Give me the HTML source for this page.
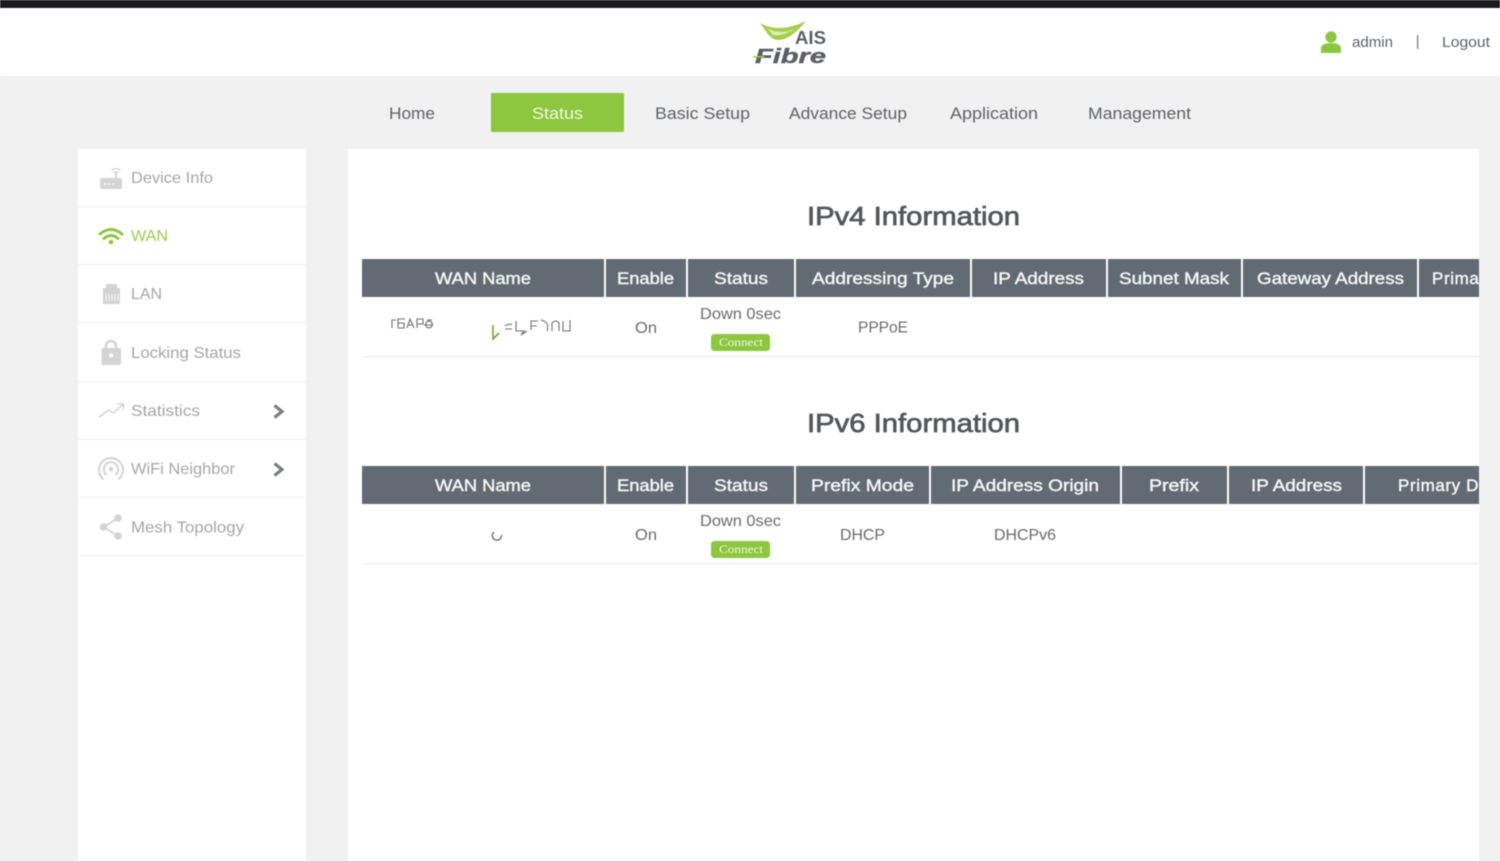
<!DOCTYPE html>
<html lang="en"><head><meta charset="utf-8"><title>AIS Fibre - WAN Status</title>
<style>
html,body{margin:0;padding:0;width:1500px;height:861px;overflow:hidden;background:#f1f1f1}
svg{display:block;filter:blur(.45px)}
text{font-family:"Liberation Sans",sans-serif}
.nav{font-size:17px;fill:#5f6268}
.side{font-size:16px;fill:#a6a6a6}
.th{font-size:17px;fill:#f4f5f6;stroke:#f4f5f6;stroke-width:.45px}
.td{font-size:16px;fill:#6a6a6a}
.title{font-size:26px;fill:#54565a;stroke:#54565a;stroke-width:.7px}
.hd{fill:#626a73}
.btn{font-family:"Liberation Serif",serif;font-size:12px;fill:#eef6e2}
.ic{fill:#d4d4d4}
.st{fill:none;stroke:#d4d4d4;stroke-linecap:round;stroke-linejoin:round}
.sep{fill:#f2f2f2}
</style></head><body>
<svg width="1500" height="861" viewBox="0 0 1500 861" xmlns="http://www.w3.org/2000/svg">
<defs><clipPath id="c"><rect x="348" y="149" width="1131" height="712"/></clipPath></defs>
<rect width="1500" height="861" fill="#f1f1f1"/>
<rect width="1500" height="8" fill="#1a1a1c"/>
<rect y="8" width="1500" height="68" fill="#fff"/>

<!-- logo -->
<path d="M760 23C771 29 785 31 806 21C797 32 788 40 778 40C770 40 766 31 760 23Z" fill="#a4cf4a"/>
<path d="M767 28C775 33 786 33 797 28C788 33 778 37 773 35Z" fill="#dcecb4"/>
<text x="795" y="44" font-size="18" font-weight="bold" fill="#5c5f63" textLength="31" lengthAdjust="spacingAndGlyphs">AIS</text>
<text x="755" y="63" font-size="20" font-weight="bold" font-style="italic" fill="#5c5f63" textLength="71" lengthAdjust="spacingAndGlyphs" stroke="#5c5f63" stroke-width=".4">Fibre</text>
<rect x="753" y="56" width="11" height="1.600" fill="#a4cf4a"/>

<!-- user -->
<circle cx="1331" cy="37" r="5.600" fill="#8dc63f"/>
<path d="M1321 53V48C1321 45 1325 43 1331 43S1341 45 1341 48V53Z" fill="#8dc63f"/>
<text x="1352" y="47" font-size="15" fill="#5f6268" textLength="41" lengthAdjust="spacingAndGlyphs">admin</text>
<rect x="1417" y="35" width="1.200" height="14" fill="#777"/>
<text x="1442" y="47" font-size="15" fill="#5f6268" textLength="48" lengthAdjust="spacingAndGlyphs">Logout</text>

<!-- nav -->
<rect x="491" y="93" width="133" height="39" rx="1" fill="#8dc63f"/>
<text class="nav" x="389" y="119" textLength="46" lengthAdjust="spacingAndGlyphs">Home</text>
<text class="nav" x="532" y="119" textLength="51" lengthAdjust="spacingAndGlyphs" style="fill:#f2f8e6">Status</text>
<text class="nav" x="655" y="119" textLength="95" lengthAdjust="spacingAndGlyphs">Basic Setup</text>
<text class="nav" x="789" y="119" textLength="118" lengthAdjust="spacingAndGlyphs">Advance Setup</text>
<text class="nav" x="950" y="119" textLength="88" lengthAdjust="spacingAndGlyphs">Application</text>
<text class="nav" x="1088" y="119" textLength="103" lengthAdjust="spacingAndGlyphs">Management</text>

<!-- sidebar -->
<rect x="78" y="149" width="228" height="712" fill="#fff"/>
<rect class="sep" x="78" y="206" width="228" height="1.200"/>
<rect class="sep" x="78" y="264" width="228" height="1.200"/>
<rect class="sep" x="78" y="322" width="228" height="1.200"/>
<rect class="sep" x="78" y="381" width="228" height="1.200"/>
<rect class="sep" x="78" y="439" width="228" height="1.200"/>
<rect class="sep" x="78" y="497" width="228" height="1.200"/>
<rect class="sep" x="78" y="555" width="228" height="1.200"/>

<text class="side" x="131" y="183" textLength="82" lengthAdjust="spacingAndGlyphs">Device Info</text>
<text class="side" x="131" y="241" textLength="37" lengthAdjust="spacingAndGlyphs" style="fill:#9ccb55">WAN</text>
<text class="side" x="131" y="299" textLength="31" lengthAdjust="spacingAndGlyphs">LAN</text>
<text class="side" x="131" y="358" textLength="110" lengthAdjust="spacingAndGlyphs">Locking Status</text>
<text class="side" x="131" y="416" textLength="69" lengthAdjust="spacingAndGlyphs">Statistics</text>
<text class="side" x="131" y="474" textLength="104" lengthAdjust="spacingAndGlyphs">WiFi Neighbor</text>
<text class="side" x="131" y="532.500" textLength="113" lengthAdjust="spacingAndGlyphs">Mesh Topology</text>

<!-- device icon -->
<rect class="ic" x="100" y="178" width="22" height="11" rx="2"/>
<rect class="ic" x="115" y="172" width="2" height="7"/>
<path class="st" stroke-width="1.300" d="M112 170Q116 167 120 170M113.500 172.500Q116 171 118.500 172.500"/>
<circle cx="105" cy="184" r="1" fill="#fff"/><circle cx="109" cy="184" r="1" fill="#fff"/><circle cx="113" cy="184" r="1" fill="#fff"/>
<!-- wan icon -->
<path d="M100 234Q111 225 122 234M104 238.500Q111 232.500 118 238.500" fill="none" stroke="#8dc63f" stroke-width="3" stroke-linecap="round"/>
<circle cx="111" cy="242" r="2.300" fill="#8dc63f"/>
<!-- lan icon -->
<path class="ic" d="M106 284H117V288H120V304H103V288H106Z"/>
<path d="M106 294V301M109 294V301M112 294V301M115 294V301M118 294V301" stroke="#fff" stroke-width=".8"/>
<!-- lock icon -->
<path class="st" stroke-width="2.600" d="M106 349V346A5 5 0 0 1 116 346V349"/>
<rect class="ic" x="101.500" y="348" width="19.500" height="17" rx="2"/>
<circle cx="111.200" cy="355.500" r="2.200" fill="#fff"/>
<!-- stats icon -->
<path class="st" stroke-width="1.500" d="M99.500 417L108.500 410L113.500 413L123 404.500M118 404H123.500V409"/>
<!-- wifi neighbor icon -->
<path class="st" stroke-width="2" d="M103 479A12 12 0 1 1 119 479M106 474.500A7.200 7.200 0 1 1 116 474.500"/>
<circle cx="111" cy="469" r="2.300" fill="#d4d4d4"/>
<!-- mesh icon -->
<path class="st" stroke-width="1.800" d="M118 518L103.500 527L118 536"/>
<circle class="ic" cx="103.500" cy="527" r="3.800"/><circle class="ic" cx="118" cy="518" r="3.800"/><circle class="ic" cx="118" cy="536" r="3.800"/>
<!-- chevrons -->
<path d="M274.500 405.500L282 411.500L274.500 417.500" fill="none" stroke="#7a7f85" stroke-width="3.200"/>
<path d="M274.500 463.500L282 469.500L274.500 475.500" fill="none" stroke="#7a7f85" stroke-width="3.200"/>

<!-- content -->
<rect x="348" y="149" width="1131" height="712" fill="#fff"/>
<text class="title" x="807" y="225" textLength="213" lengthAdjust="spacingAndGlyphs">IPv4 Information</text>
<text class="title" x="807" y="432" textLength="213" lengthAdjust="spacingAndGlyphs">IPv6 Information</text>

<g clip-path="url(#c)">
<!-- IPv4 table -->
<rect class="hd" x="362" y="259" width="242" height="38"/>
<rect class="hd" x="606" y="259" width="80" height="38"/>
<rect class="hd" x="688" y="259" width="106" height="38"/>
<rect class="hd" x="796" y="259" width="174" height="38"/>
<rect class="hd" x="972" y="259" width="134" height="38"/>
<rect class="hd" x="1108" y="259" width="133" height="38"/>
<rect class="hd" x="1243" y="259" width="174" height="38"/>
<rect class="hd" x="1419" y="259" width="80" height="38"/>
<text class="th" x="435" y="284" textLength="96" lengthAdjust="spacingAndGlyphs">WAN Name</text>
<text class="th" x="617" y="284" textLength="57" lengthAdjust="spacingAndGlyphs">Enable</text>
<text class="th" x="714" y="284" textLength="54" lengthAdjust="spacingAndGlyphs">Status</text>
<text class="th" x="812" y="284" textLength="142" lengthAdjust="spacingAndGlyphs">Addressing Type</text>
<text class="th" x="993" y="284" textLength="91" lengthAdjust="spacingAndGlyphs">IP Address</text>
<text class="th" x="1119" y="284" textLength="110" lengthAdjust="spacingAndGlyphs">Subnet Mask</text>
<text class="th" x="1257" y="284" textLength="147" lengthAdjust="spacingAndGlyphs">Gateway Address</text>
<text class="th" x="1432" y="284" letter-spacing=".6">Primary DNS</text>

<text class="td" x="700" y="319" textLength="81" lengthAdjust="spacingAndGlyphs">Down 0sec</text>
<text class="td" x="635" y="333" textLength="22" lengthAdjust="spacingAndGlyphs">On</text>
<text class="td" x="858" y="332.500" textLength="50" lengthAdjust="spacingAndGlyphs">PPPoE</text>
<rect x="711" y="334" width="59" height="17" rx="3.500" fill="#8dc63f"/>
<text class="btn" x="719" y="346" textLength="44" lengthAdjust="spacingAndGlyphs">Connect</text>
<rect x="362" y="356" width="1117" height="1.200" fill="#eeeeee"/>

<!-- garbled cell glyphs -->
<path fill="none" stroke="#6f6f6f" stroke-width="1.100" d="M392 328V320H396M398 328V319H405M398 323H404V328H398M407 328L410 319L414 328M408 325H413M417 328V319H423V324H417M424 325H433M427 320H432M426 323A3 3 0 1 0 432 326A3 3 0 1 0 426 323"/>
<path fill="none" stroke="#6f6f6f" stroke-width="1.100" d="M505 329H512M505 326Q509 323 512 325M516 321V331H524L521 335L527 331M531 330V321H538M531 326H537M541 320Q550 322 547 331M552 331V323Q556 319 559 323V331M563 321V331H570V320"/>
<path d="M493 325V339L499 333" fill="none" stroke="#6fa838" stroke-width="1.600"/>

<!-- IPv6 table -->
<rect class="hd" x="362" y="466" width="242" height="38"/>
<rect class="hd" x="606" y="466" width="80" height="38"/>
<rect class="hd" x="688" y="466" width="106" height="38"/>
<rect class="hd" x="796" y="466" width="133" height="38"/>
<rect class="hd" x="931" y="466" width="189" height="38"/>
<rect class="hd" x="1122" y="466" width="105" height="38"/>
<rect class="hd" x="1229" y="466" width="134" height="38"/>
<rect class="hd" x="1365" y="466" width="134" height="38"/>
<text class="th" x="435" y="491" textLength="96" lengthAdjust="spacingAndGlyphs">WAN Name</text>
<text class="th" x="617" y="491" textLength="57" lengthAdjust="spacingAndGlyphs">Enable</text>
<text class="th" x="714" y="491" textLength="54" lengthAdjust="spacingAndGlyphs">Status</text>
<text class="th" x="811" y="491" textLength="103" lengthAdjust="spacingAndGlyphs">Prefix Mode</text>
<text class="th" x="951" y="491" textLength="148" lengthAdjust="spacingAndGlyphs">IP Address Origin</text>
<text class="th" x="1149" y="491" textLength="50" lengthAdjust="spacingAndGlyphs">Prefix</text>
<text class="th" x="1251" y="491" textLength="91" lengthAdjust="spacingAndGlyphs">IP Address</text>
<text class="th" x="1398" y="491" letter-spacing=".6">Primary DNS</text>

<text class="td" x="700" y="526" textLength="81" lengthAdjust="spacingAndGlyphs">Down 0sec</text>
<text class="td" x="635" y="540" textLength="22" lengthAdjust="spacingAndGlyphs">On</text>
<text class="td" x="840" y="540" textLength="45" lengthAdjust="spacingAndGlyphs">DHCP</text>
<text class="td" x="994" y="540" textLength="62" lengthAdjust="spacingAndGlyphs">DHCPv6</text>
<rect x="711" y="541" width="59" height="17" rx="3.500" fill="#8dc63f"/>
<text class="btn" x="719" y="553" textLength="44" lengthAdjust="spacingAndGlyphs">Connect</text>
<rect x="362" y="563" width="1117" height="1.200" fill="#eeeeee"/>
<path d="M494 532A4.600 4.600 0 1 0 501.500 535" fill="none" stroke="#666" stroke-width="1.300"/>
</g>
</svg>
</body></html>
